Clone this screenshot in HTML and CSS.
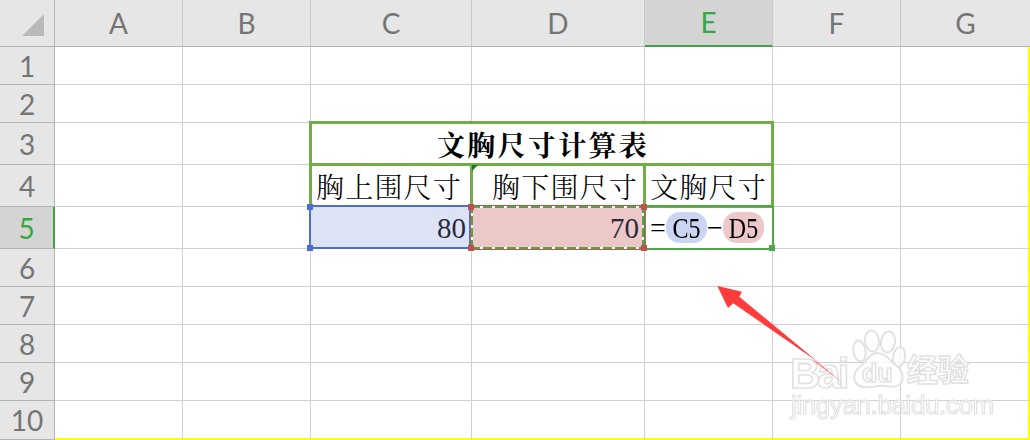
FILE: index.html
```html
<!DOCTYPE html>
<html lang="zh">
<head>
<meta charset="utf-8">
<title>文胸尺寸计算表</title>
<link rel="stylesheet" href="styles.css">
</head>
<body>
<div class="sheet">
  <div class="corner"><svg class="corner-mark" width="22" height="22" viewBox="0 0 22 22"><path d="M0 22 22 0V22Z"/></svg></div>
  <div class="ch">A</div><div class="ch">B</div><div class="ch">C</div><div class="ch">D</div><div class="ch ch-on">E</div><div class="ch">F</div><div class="ch ch-end">G</div>

  <div class="rh">1</div><div class="c"></div><div class="c"></div><div class="c"></div><div class="c"></div><div class="c"></div><div class="c"></div><div class="c end"></div>
  <div class="rh">2</div><div class="c"></div><div class="c"></div><div class="c"></div><div class="c"></div><div class="c"></div><div class="c"></div><div class="c end"></div>
  <div class="rh">3</div><div class="c"></div><div class="c"></div><div class="c t title">文胸尺寸计算表</div><div class="c"></div><div class="c end"></div>
  <div class="rh">4</div><div class="c"></div><div class="c"></div><div class="c t label label-c">胸上围尺寸</div><div class="c t label label-d">胸下围尺寸<span class="err"></span></div><div class="c t label label-e">文胸尺寸</div><div class="c"></div><div class="c end"></div>
  <div class="rh rh-on">5</div><div class="c"></div><div class="c"></div>
  <div class="c num ref-c">80<i class="h h-blue tl"></i><i class="h h-blue bl"></i></div>
  <div class="c num ref-d">70<i class="h h-red tl"></i><i class="h h-red bl"></i><i class="h h-red tr"></i><i class="h h-red br"></i></div>
  <div class="c formula"><span class="eq">=</span><span class="pill pill-c"><span class="tall">C5</span></span><span class="minus">−</span><span class="pill pill-d"><span class="tall">D5</span></span><i class="h h-green br"></i></div>
  <div class="c"></div><div class="c end"></div>
  <div class="rh">6</div><div class="c"></div><div class="c"></div><div class="c"></div><div class="c"></div><div class="c"></div><div class="c"></div><div class="c end"></div>
  <div class="rh">7</div><div class="c"></div><div class="c"></div><div class="c"></div><div class="c"></div><div class="c"></div><div class="c"></div><div class="c end"></div>
  <div class="rh">8</div><div class="c"></div><div class="c"></div><div class="c"></div><div class="c"></div><div class="c"></div><div class="c"></div><div class="c end"></div>
  <div class="rh">9</div><div class="c"></div><div class="c"></div><div class="c"></div><div class="c"></div><div class="c"></div><div class="c"></div><div class="c end"></div>
  <div class="rh">10</div><div class="c last"></div><div class="c last"></div><div class="c last"></div><div class="c last"></div><div class="c last"></div><div class="c last"></div><div class="c last end"></div>
</div>

<svg class="arrow" width="1030" height="440" viewBox="0 0 1030 440">
  <path fill="#ff3b3b" d="M717.3 286 742 291.7 739.3 296.7 818 362 733.3 303.3 728 308Z"/>
  <path fill="#ff3b3b" opacity=".55" d="M818 362 844 384 812 360Z"/>
</svg>

<div class="mark">
  <svg class="paw" width="54" height="62" viewBox="0 0 54 62">
    <g fill="#fff" fill-opacity=".75" stroke="#e2e2e2" stroke-width="2">
      <ellipse cx="7.5" cy="22" rx="6" ry="10.5" transform="rotate(-8 7.5 22)"/>
      <ellipse cx="20" cy="12" rx="7" ry="10.5" transform="rotate(-6 20 12)"/>
      <ellipse cx="36" cy="13" rx="7" ry="10.5" transform="rotate(8 36 13)"/>
      <ellipse cx="47" cy="28" rx="6" ry="10" transform="rotate(10 47 28)"/>
      <path d="M25 24C18 24 15 32 9 37 2 42 0 50 5 55 10 60 18 58 26 57 33 56 41 60 47 56 53 51 51 42 45 37 38 32 34 24 25 24Z"/>
    </g>
  </svg>
  <span class="mark-text mark-bai">Bai</span>
  <span class="mark-text mark-du">du</span>
  <span class="mark-text mark-cn">经验</span>
  <span class="mark-text mark-url">jingyan.baidu.com</span>
</div>
</body>
</html>
```
FILE: styles.css
```css
* { box-sizing: border-box; }
html, body { margin: 0; padding: 0; }
body { width: 1030px; height: 440px; overflow: hidden; background: #fff; position: relative; }

.sheet {
  display: grid;
  grid-template-columns: 55px 128px 128px 161px 173px 128px 128px 129px;
  grid-template-rows: 47px 38px 38px 42px 42px 42px 38px 38px 38px 38px 39px;
  width: 1030px;
  height: 440px;
}

.corner, .ch, .rh {
  background: #e6e6e6;
  color: #757575;
  font-family: Lato, "Open Sans", sans-serif;
  font-size: 28px;
  display: flex;
  align-items: center;
  justify-content: center;
}
.corner { border-right: 1px solid #b4b4b4; border-bottom: 1px solid #b4b4b4; align-items: flex-start; justify-content: flex-start; padding: 14px 0 0 22px; }
.corner-mark { display: block; fill: #b9b9b9; }
.ch { border-right: 1px solid #c9c9c9; border-bottom: 1px solid #b4b4b4; padding-bottom: 1px; }
.ch-end { border-right: 0; }
.ch-on { background: #d4d4d4; color: #35a83f; border-bottom: 2px solid #3fa447; }
.rh { border-right: 1px solid #b4b4b4; border-bottom: 1px solid #b4b4b4; }
.rh-on { background: #d4d4d4; color: #35a83f; border-right: 2px solid #3fa447; }

.c { border-right: 1px solid #d0d0d0; border-bottom: 1px solid #d0d0d0; position: relative; color: #000; }
.end { border-right: 2px solid #ffff00; }
.last { border-bottom: 2px solid #ffff00; }

.t { z-index: 1; }
.t::after {
  content: "";
  position: absolute;
  inset: -2px -2px -2px -2px;
  border: 3px solid #70ad47;
  pointer-events: none;
}

.title {
  grid-column: span 3;
  display: flex;
  align-items: center;
  justify-content: center;
  font-family: "Noto Serif CJK SC", "Noto Sans CJK SC", sans-serif;
  font-weight: 700;
  font-size: 28px;
  letter-spacing: 2.3px;
  padding-left: 3px;
}
.label {
  display: flex;
  align-items: center;
  font-family: "Noto Serif CJK SC", "Noto Sans CJK SC", sans-serif;
  font-weight: 300;
  font-size: 28px;
  letter-spacing: 1.2px;
}
.label-c { padding-left: 5px; }
.label-d { justify-content: flex-end; padding-right: 6px; }
.label-e { justify-content: center; }
.err {
  position: absolute;
  left: 0;
  top: 0;
  width: 0;
  height: 0;
  border-top: 6px solid #1f7a1f;
  border-right: 6px solid transparent;
  z-index: 3;
}

.num {
  display: flex;
  align-items: center;
  justify-content: flex-end;
  font-family: "Liberation Serif", serif;
  font-size: 29px;
  padding: 2px 5px 0 0;
  color: #2a2a3c;
}
.ref-c { background: #dde3f5; z-index: 3; }
.ref-c::after { content: ""; position: absolute; inset: -2px 0 -1px -2px; border: 2px solid #4a6fd0; }
.ref-d { background: #ecc8c8; z-index: 4; }
.ref-d::after { content: ""; position: absolute; inset: -2px -1px -2px -2px; border: 1px solid #c0504d; }
.ref-d::before {
  content: "";
  position: absolute;
  inset: -1px 0 -1px -1px;
  background:
    repeating-linear-gradient(90deg, #4ea84a 0 9px, #fff 9px 12px) left top / 100% 2px no-repeat,
    repeating-linear-gradient(90deg, #4ea84a 0 9px, #fff 9px 12px) left bottom / 100% 2px no-repeat,
    repeating-linear-gradient(0deg, #4ea84a 0 9px, #fff 9px 12px) left top / 2px 100% no-repeat,
    repeating-linear-gradient(0deg, #4ea84a 0 9px, #fff 9px 12px) right top / 2px 100% no-repeat;
}

.formula {
  display: flex;
  align-items: center;
  padding-left: 5px;
  font-family: "Liberation Serif", serif;
  font-size: 28px;
  z-index: 2;
}
.formula::after { content: ""; position: absolute; inset: -2px -2px -2px -1px; border: 2px solid #4ea84a; pointer-events: none; }
.eq { width: 16px; }
.pill { display: block; width: 41px; height: 31px; line-height: 32px; border-radius: 14px; text-align: center; font-size: 24px; }
.tall { display: inline-block; transform: scaleY(1.2); }
.pill-c { background: #c9d5f2; }
.pill-d { background: #ecc8c8; }
.minus { width: 16px; text-align: center; }

.h { position: absolute; width: 6px; height: 6px; z-index: 5; display: block; }
.h-blue { background: #4a6fd0; }
.h-red { background: #c0504d; }
.h-green { background: #4ea84a; }
.tl { left: -4px; top: -3px; }
.bl { left: -4px; bottom: -3px; }
.tr { right: -3px; top: -3px; }
.br { right: -3px; bottom: -3px; }

.arrow { position: absolute; left: 0; top: 0; z-index: 8; pointer-events: none; }

.mark { position: absolute; left: 780px; top: 325px; width: 200px; height: 100px; z-index: 7; filter: blur(.4px); }
.paw { position: absolute; left: 72px; top: 4px; }
.mark-text {
  position: absolute;
  color: rgba(255,255,255,.75);
  -webkit-text-stroke: 1.6px #e2e2e2;
  font-family: "Liberation Sans", sans-serif;
  font-weight: 700;
  white-space: nowrap;
  line-height: 1;
}
.mark-bai { left: 10px; top: 33px; font-size: 42px; line-height: 32px; letter-spacing: -3px; }
.mark-du { left: 82px; top: 36px; font-size: 25px; }
.mark-cn { left: 127px; top: 27px; font-size: 31px; font-family: "Noto Sans CJK SC", sans-serif; }
.mark-url { left: 11px; top: 67px; font-size: 26px; font-weight: 400; -webkit-text-stroke-width: 1.2px; letter-spacing: -.4px; }
```
